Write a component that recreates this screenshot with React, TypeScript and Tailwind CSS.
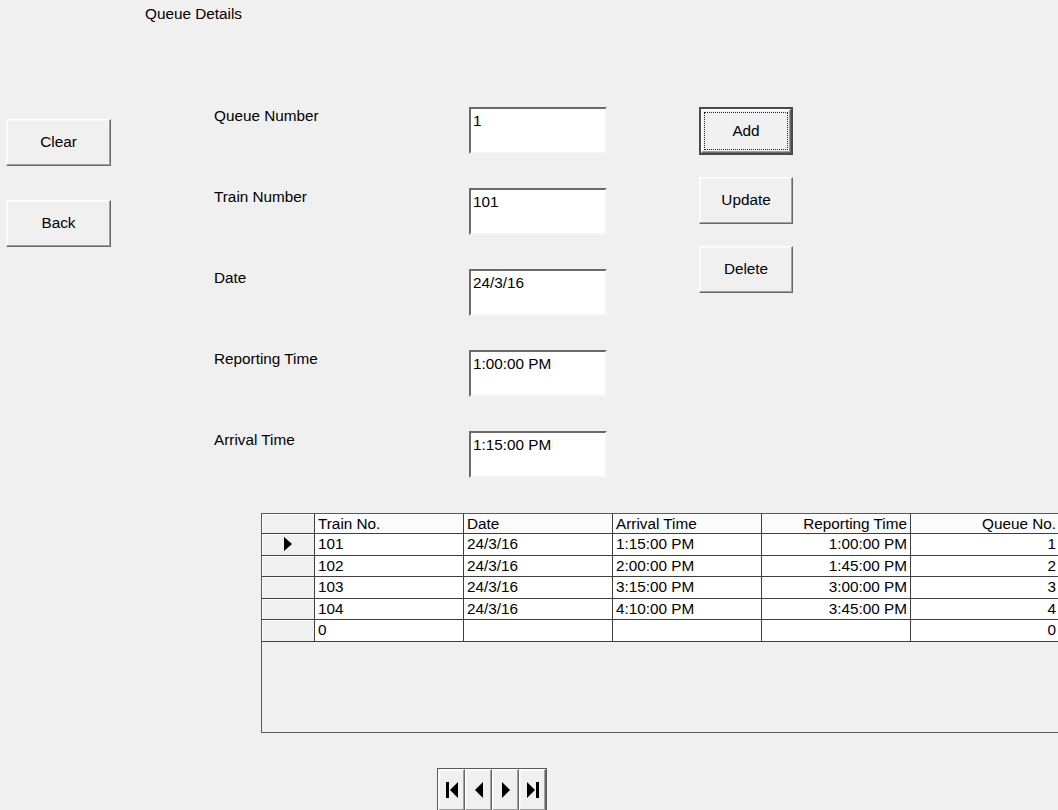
import React from "react";

const font = { fontFamily: '"Liberation Sans", Arial, sans-serif' };

const raised =
  "bg-[#f0f0f0] border border-t-white border-l-white border-b-[#696969] border-r-[#696969] shadow-[inset_-1px_-1px_0_#a0a0a0,inset_1px_1px_0_#f8f8f8]";

function Btn({ label, w, h, isDefault }: { label: string; w: string; h: string; isDefault?: boolean }) {
  if (isDefault) {
    return (
      <div className={`${w} ${h} border-2 border-[#4a4a4a] bg-[#f0f0f0]`}>
        <div className={`w-full h-full ${raised} p-[2px]`}>
          <div className="w-full h-full border border-dotted border-[#222] flex items-center justify-center text-[15.3px] text-black">
            {label}
          </div>
        </div>
      </div>
    );
  }
  return (
    <div className={`${w} ${h} ${raised} flex items-center justify-center text-[15.3px] text-black`}>
      {label}
    </div>
  );
}

function Field({ label, value }: { label: string; value: string }) {
  return (
    <div className="flex h-[47px] mb-[34px]">
      <div className="w-[255px] text-[15.3px] leading-[18px] text-black">{label}</div>
      <div className="w-[138px] h-[47px] bg-white border-2 border-t-[#6a6a6a] border-l-[#6a6a6a] border-b-[#f4f4f4] border-r-[#f4f4f4] pl-[2px] pt-[3px] text-[15.3px] leading-[18px] text-black">
        {value}
      </div>
    </div>
  );
}

const cols = ["Train No.", "Date", "Arrival Time", "Reporting Time", "Queue No."];
const align = ["left", "left", "left", "right", "right"];
const rows = [
  ["101", "24/3/16", "1:15:00 PM", "1:00:00 PM", "1"],
  ["102", "24/3/16", "2:00:00 PM", "1:45:00 PM", "2"],
  ["103", "24/3/16", "3:15:00 PM", "3:00:00 PM", "3"],
  ["104", "24/3/16", "4:10:00 PM", "3:45:00 PM", "4"],
  ["0", "", "", "", "0"],
];

function Cell({ text, right }: { text: string; right: boolean }) {
  return (
    <div
      className={`w-[149px] shrink-0 border-l border-[#3f3f3f] px-[3px] text-[15.3px] leading-[20px] text-black whitespace-nowrap overflow-hidden ${
        right ? "text-right" : "text-left"
      }`}
    >
      {text}
    </div>
  );
}

function NavBtn({ children }: { children: React.ReactNode }) {
  return (
    <div className={`w-[27px] h-[42px] ${raised} flex items-center justify-center`}>
      <svg width="16" height="18" viewBox="0 0 16 18">{children}</svg>
    </div>
  );
}

export default function App() {
  return (
    <div className="w-[1058px] h-[810px] bg-[#f0f0f0] overflow-hidden relative" style={font}>
      <div className="pl-[145px] pt-[5px] text-[15.3px] leading-[17px] text-black">Queue Details</div>

      <div className="flex mt-[85px]">
        <div className="ml-[6px] w-[105px] pt-[12px] flex flex-col gap-[34px]">
          <Btn label="Clear" w="w-[105px]" h="h-[47px]" />
          <Btn label="Back" w="w-[105px]" h="h-[47px]" />
        </div>

        <div className="ml-[103px] w-[393px]">
          <Field label="Queue Number" value="1" />
          <Field label="Train Number" value="101" />
          <Field label="Date" value="24/3/16" />
          <Field label="Reporting Time" value="1:00:00 PM" />
          <div className="-mb-[34px]">
            <Field label="Arrival Time" value="1:15:00 PM" />
          </div>
        </div>

        <div className="ml-[92px] flex flex-col gap-[22px]">
          <Btn label="Add" w="w-[94px]" h="h-[48px]" isDefault />
          <Btn label="Update" w="w-[94px]" h="h-[47px]" />
          <Btn label="Delete" w="w-[94px]" h="h-[47px]" />
        </div>
      </div>

      <div className="ml-[261px] mt-[35px] w-[799px] h-[220px] border border-[#5a5a5a] border-r-0 bg-[#f0f0f0]">
        <div className="flex h-[20px] border-b border-[#3f3f3f]">
          <div className="w-[52px] shrink-0 bg-[#f0f0f0] shadow-[inset_1px_1px_0_#fff]" />
          {cols.map((c, i) => (
            <div key={c} className="bg-[#fbfbfb] flex">
              <Cell text={c} right={align[i] === "right"} />
            </div>
          ))}
        </div>
        {rows.map((r, ri) => (
          <div key={ri} className="flex h-[21.5px] border-b border-[#3f3f3f]">
            <div className="w-[52px] shrink-0 bg-[#f0f0f0] shadow-[inset_1px_1px_0_#fff] flex items-center justify-center">
              {ri === 0 && (
                <svg width="10" height="14" viewBox="0 0 10 14">
                  <polygon points="1,0 9,7 1,14" fill="#000" />
                </svg>
              )}
            </div>
            <div className="flex bg-white">
              {r.map((t, ci) => (
                <Cell key={ci} text={t} right={align[ci] === "right"} />
              ))}
            </div>
          </div>
        ))}
      </div>

      <div className="ml-[437px] mt-[35px] flex border border-[#5a5a5a] w-fit bg-[#f0f0f0]">
        <NavBtn>
          <rect x="2" y="1" width="3" height="16" fill="#000" />
          <polygon points="14,1 6,9 14,17" fill="#000" />
        </NavBtn>
        <NavBtn>
          <polygon points="12,1 4,9 12,17" fill="#000" />
        </NavBtn>
        <NavBtn>
          <polygon points="4,1 12,9 4,17" fill="#000" />
        </NavBtn>
        <NavBtn>
          <polygon points="2,1 10,9 2,17" fill="#000" />
          <rect x="11" y="1" width="3" height="16" fill="#000" />
        </NavBtn>
      </div>
    </div>
  );
}
